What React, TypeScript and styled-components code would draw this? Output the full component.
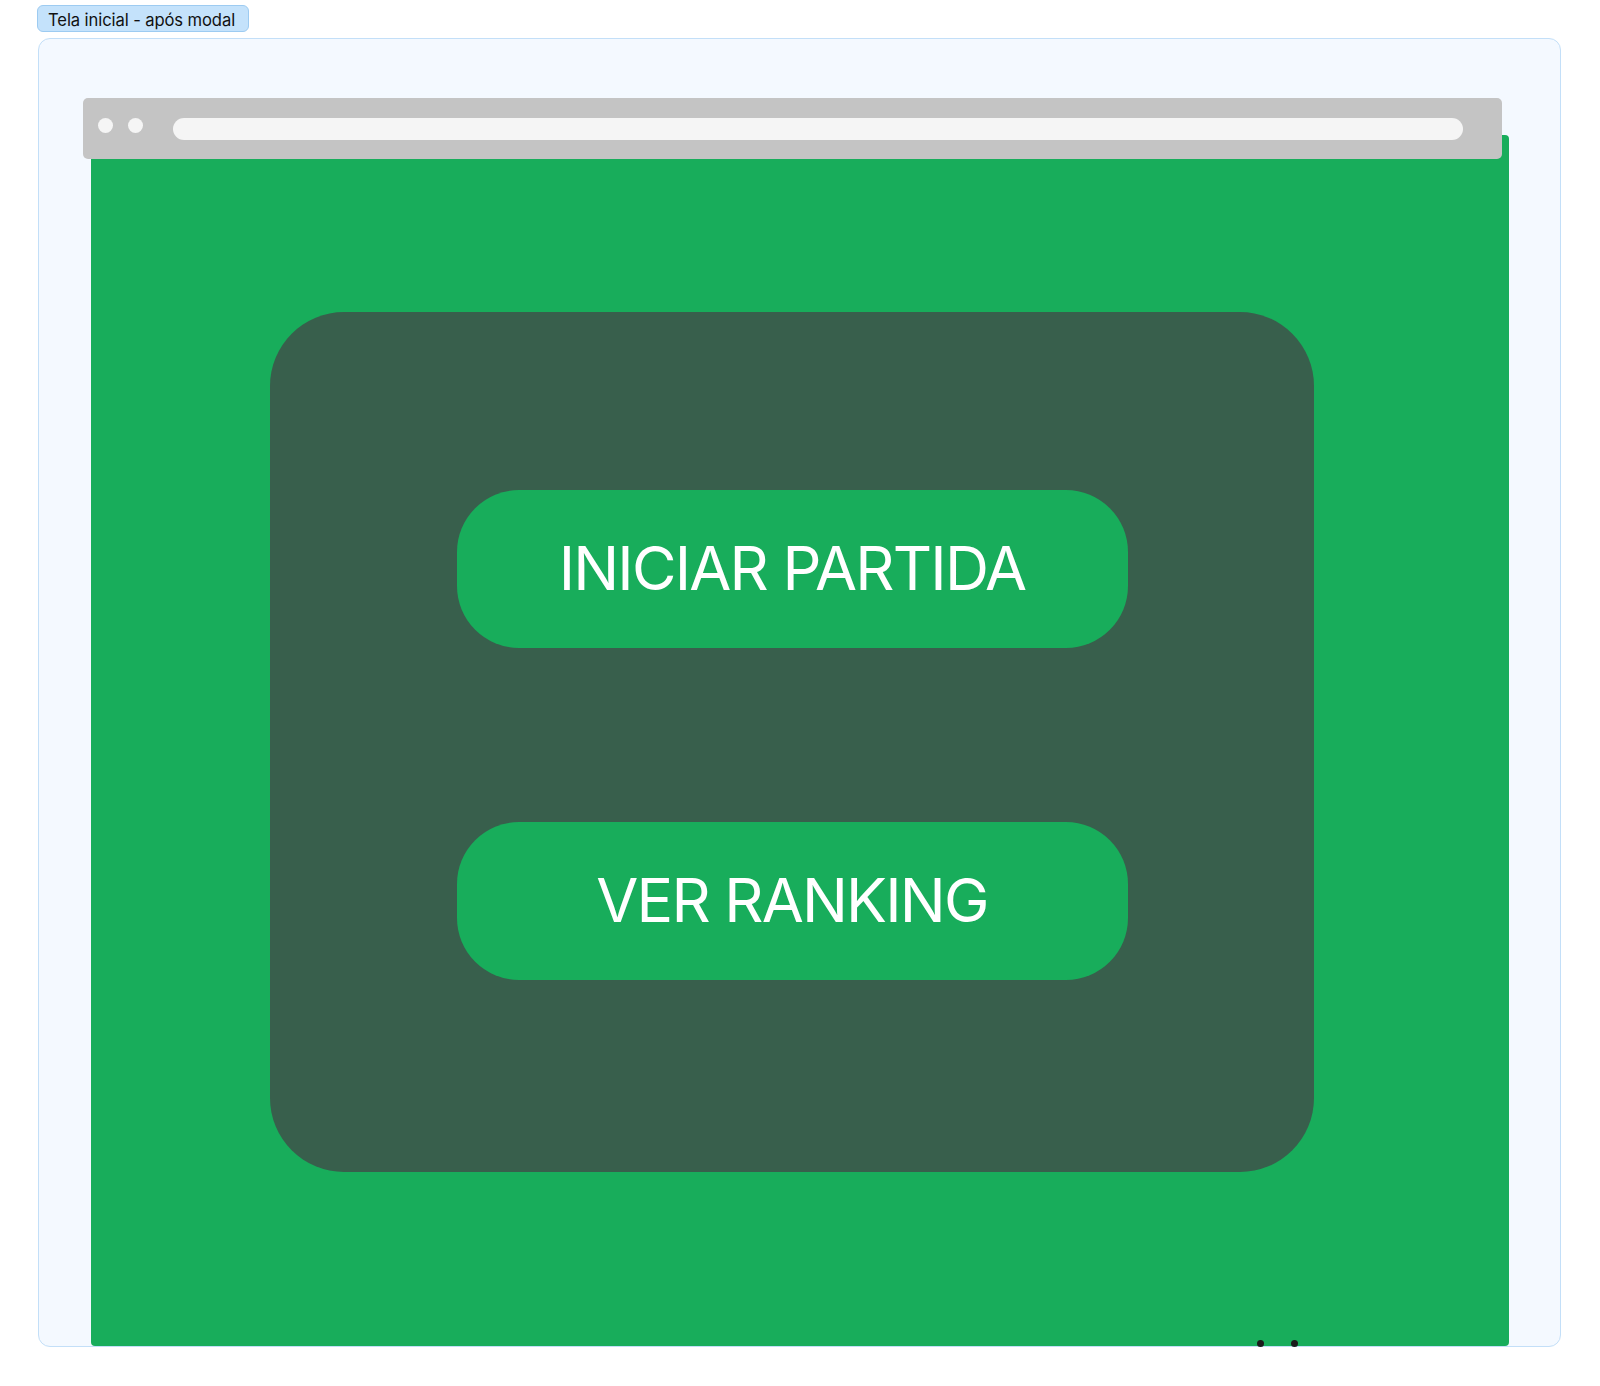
import React from "react";
import styled, { createGlobalStyle } from "styled-components";

const Global = createGlobalStyle`
  html, body { margin: 0; padding: 0; background: #ffffff; }
  body { font-family: Inter, "Noto Sans", "Liberation Sans", sans-serif; }
  * { box-sizing: border-box; }
`;

const GREEN = "#18ad5b";

const Page = styled.div`
  width: 1600px;
  height: 1386px;
  padding: 5px 0 0 37px;
  display: flex;
  flex-direction: column;
  align-items: flex-start;
`;

const Label = styled.div`
  height: 27px;
  width: 212px;
  padding: 2px 0 0 10px;
  display: flex;
  align-items: center;
  font-size: 16.6px;
  color: #111;
  background: #c4e2fb;
  border: 1px solid #9dcbf1;
  border-radius: 6px;
  letter-spacing: -0.1px;
  white-space: nowrap;
`;

const Frame = styled.div`
  margin-top: 6px;
  margin-left: 1px;
  width: 1523px;
  height: 1309px;
  border: 1px solid #c3dff8;
  border-radius: 12px;
  background: #f4f9ff;
  padding: 59px 0 0 44px;
  display: flex;
  flex-direction: column;
  align-items: flex-start;
`;

const Bar = styled.div`
  position: relative;
  z-index: 1;
  width: 1419px;
  height: 61px;
  background: #c4c4c4;
  border-radius: 5px;
  display: flex;
  align-items: flex-start;
  padding: 20px 39px 0 15px;
`;

const BarDot = styled.span<{ $gap: number }>`
  width: 15px;
  height: 15px;
  border-radius: 50%;
  background: #f5f5f5;
  margin-right: ${(p) => p.$gap}px;
  flex: none;
`;

const Address = styled.div`
  flex: 1;
  height: 22px;
  border-radius: 11px;
  background: #f5f5f5;
`;

const Screen = styled.div`
  position: relative;
  margin-top: -24px;
  margin-left: 8px;
  width: 1418px;
  height: 1212px;
  background: ${GREEN};
  border-radius: 4px;
  padding: 177px 195px 0 179px;
`;

const Modal = styled.div`
  width: 1044px;
  height: 860px;
  border-radius: 74px;
  background: #385f4c;
  display: flex;
  flex-direction: column;
  align-items: center;
  padding-top: 178px;
  gap: 174px;
`;

const Button = styled.button`
  width: 671px;
  height: 158px;
  border: none;
  border-radius: 62px;
  background: ${GREEN};
  color: #ffffff;
  font-family: Inter, "Noto Sans", "Liberation Sans", sans-serif;
  font-size: 61px;
  font-weight: 400;
  letter-spacing: -1.8px;
  display: flex;
  align-items: center;
  justify-content: center;
  padding: 0 0 2px 0;
  cursor: pointer;
`;

const Handle = styled.span<{ $left: number }>`
  position: absolute;
  left: ${(p) => p.$left}px;
  top: 1205px;
  width: 7px;
  height: 7px;
  border-radius: 50%;
  background: #1b1b1b;
`;

export default function App() {
  return (
    <>
      <Global />
      <Page>
        <Label>Tela inicial - após modal</Label>
        <Frame>
          <Bar>
            <BarDot $gap={15} />
            <BarDot $gap={30} />
            <Address />
          </Bar>
          <Screen>
            <Modal>
              <Button>INICIAR PARTIDA</Button>
              <Button>VER RANKING</Button>
            </Modal>
            <Handle $left={1166} />
            <Handle $left={1200} />
          </Screen>
        </Frame>
      </Page>
    </>
  );
}
